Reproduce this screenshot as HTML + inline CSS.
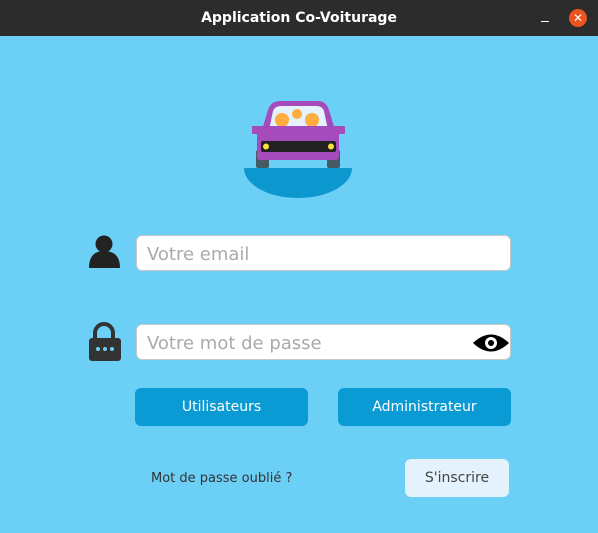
<!DOCTYPE html>
<html><head><meta charset="utf-8"><style>
body{margin:0;width:598px;height:533px;background:#6ccff6;font-family:"DejaVu Sans","Liberation Sans",sans-serif;position:relative;overflow:hidden}
.tb{position:absolute;left:0;top:0;width:598px;height:36px;background:#2c2c2c;color:#fff;font-weight:bold;font-size:14px;text-align:center;line-height:36px}
.f{position:absolute;left:136px;height:34px;background:#fff;border:1px solid #c8c8c8;border-radius:6px;color:#aaa;font-size:18px;line-height:38px;padding-left:10px;box-sizing:content-box;width:363px}
.b{position:absolute;top:388px;width:173px;height:38px;background:#0b9bd4;border-radius:6px;color:#fff;font-size:14px;text-align:center;line-height:39px}
</style></head><body>
<div class="tb">Application Co-Voiturage
<div style="position:absolute;left:541px;top:21px;width:8px;height:1px;background:#fff"></div>
<div style="position:absolute;left:569px;top:9px;width:18px;height:18px;border-radius:50%;background:#e95420;color:#fff;font-size:12px;line-height:18px;font-weight:bold">✕</div>
</div>
<svg style="position:absolute;left:0;top:0" width="598" height="533">
<path d="M244 168 H352 A54 30 0 0 1 244 168Z" fill="#0c97cf"/>
<rect x="256" y="150" width="13" height="18" rx="2" fill="#455a64"/>
<rect x="327" y="150" width="13" height="18" rx="2" fill="#455a64"/>
<path d="M262 130 L268 110 Q271 101 280 101 H318 Q326 101 329 110 L335 130Z" fill="#a54bbb"/>
<path d="M269 130 L273 111 Q275 106 281 106 H317 Q322 106 324 111 L328 130Z" fill="#e3f2fd"/>
<circle cx="282" cy="120" r="7" fill="#ffad3f"/><circle cx="312" cy="120" r="7" fill="#ffad3f"/><circle cx="297" cy="114" r="5" fill="#ffad3f"/>
<rect x="252" y="126" width="93" height="8" rx="1" fill="#a54bbb"/>
<rect x="257" y="130" width="82" height="30" rx="3" fill="#a54bbb"/>
<rect x="261" y="141" width="75" height="11" rx="2" fill="#222"/>
<circle cx="266" cy="146.5" r="3" fill="#fde03a"/><circle cx="331" cy="146.5" r="3" fill="#fde03a"/>
<circle cx="104" cy="244" r="8.5" fill="#222"/>
<path d="M89 268 Q89 251 104 251 Q120 251 120 268Z" fill="#222"/>
<path d="M95 339 V333 A9 9 0 0 1 113 333 V339" fill="none" stroke="#333" stroke-width="4"/>
<rect x="89" y="338" width="32" height="23" rx="3" fill="#333"/>
<circle cx="98" cy="349" r="2" fill="#6ccff6"/><circle cx="105" cy="349" r="2" fill="#6ccff6"/><circle cx="112" cy="349" r="2" fill="#6ccff6"/>
</svg>
<div class="f" style="top:235px">Votre email</div>
<div class="f" style="top:324px">Votre mot de passe
<svg style="position:absolute;left:335px;top:7px" width="38" height="22"><path d="M1 11 Q19 -6 37 11 Q19 28 1 11Z" fill="#000"/><circle cx="19" cy="11" r="6" fill="#fff"/><circle cx="19" cy="11" r="3" fill="#000"/></svg></div>
<div class="b" style="left:135px">Utilisateurs</div>
<div class="b" style="left:338px">Administrateur</div>
<div style="position:absolute;left:151px;top:471px;font-size:13px;color:#333">Mot de passe oublié ?</div>
<div style="position:absolute;left:405px;top:459px;width:104px;height:38px;background:#e3f2fd;border-radius:6px;color:#444;font-size:14px;text-align:center;line-height:39px">S'inscrire</div>
</body></html>
